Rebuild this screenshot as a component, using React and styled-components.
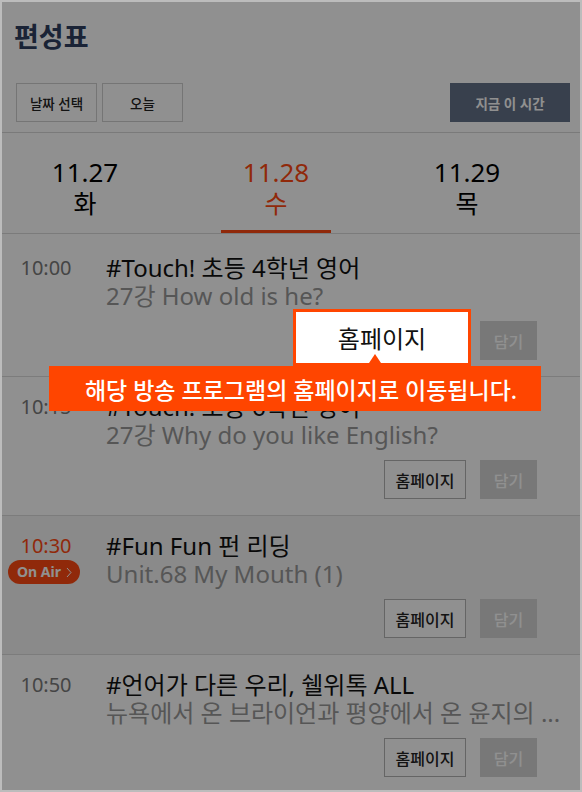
import styled, { createGlobalStyle } from "styled-components";

const GlobalStyle = createGlobalStyle`
  html, body {
    margin: 0;
    padding: 0;
    background: #fff;
  }
  body {
    font-family: "Noto Sans", "Noto Sans CJK KR", sans-serif;
  }
  * { box-sizing: border-box; }
`;

const days = [
  { date: "11.27", day: "화" },
  { date: "11.28", day: "수", active: true },
  { date: "11.29", day: "목" },
];

const programs = [
  { time: "10:00", title: "#Touch! 초등 4학년 영어", sub: "27강 How old is he?" },
  { time: "10:15", title: "#Touch! 초등 6학년 영어", sub: "27강 Why do you like English?" },
  { time: "10:30", title: "#Fun Fun 펀 리딩", sub: "Unit.68 My Mouth (1)", onAir: true },
  { time: "10:50", title: "#언어가 다른 우리, 쉘위톡 ALL", sub: "뉴욕에서 온 브라이언과 평양에서 온 윤지의 ..." },
];

const App = () => {
  return (
    <Frame>
      <GlobalStyle />
      <Header>
        <PageTitle>편성표</PageTitle>
        <Toolbar>
          <ToolButton>날짜 선택</ToolButton>
          <ToolButton>오늘</ToolButton>
          <ToolButton $dark>지금 이 시간</ToolButton>
        </Toolbar>
      </Header>

      <TabList>
        {days.map((d) => (
          <Tab key={d.date} $active={d.active}>
            <TabDate>{d.date}</TabDate>
            <TabDay>{d.day}</TabDay>
          </Tab>
        ))}
      </TabList>

      <ProgramList>
        {programs.map((p) => (
          <Row key={p.time} $onAir={p.onAir}>
            <TimeCell $onAir={p.onAir}>
              {p.time}
              {p.onAir && (
                <OnAirBadge>
                  On Air
                  <svg width="6" height="11" viewBox="0 0 6 11" fill="none">
                    <path d="M1 1l4 4.5L1 10" stroke="#fff" strokeWidth="1" />
                  </svg>
                </OnAirBadge>
              )}
            </TimeCell>
            <Info>
              <ProgramTitle>{p.title}</ProgramTitle>
              <ProgramSub>{p.sub}</ProgramSub>
              <Actions>
                <HomeButton>홈페이지</HomeButton>
                <CartButton>담기</CartButton>
              </Actions>
            </Info>
          </Row>
        ))}
      </ProgramList>

      <Dim />
      <Spotlight>홈페이지</Spotlight>
      <Tooltip>해당 방송 프로그램의 홈페이지로 이동됩니다.</Tooltip>
    </Frame>
  );
};

export default App;

const Frame = styled.div`
  position: relative;
  width: 582px;
  height: 792px;
  border: 2px solid #bcbcbc;
  overflow: hidden;
  background: #fff;
`;

const Header = styled.div`
  padding: 18px 10px 10px 14px;
  border-bottom: 1px solid #d8d8d8;
`;

const PageTitle = styled.h1`
  margin: 0 0 0 -2px;
  font-size: 27px;
  line-height: 34px;
  font-weight: 700;
  color: #2f3f60;
`;

const Toolbar = styled.div`
  display: flex;
  gap: 5px;
  margin-top: 29px;

  > :last-child {
    margin-left: auto;
  }
`;

const ToolButton = styled.button`
  width: ${(p) => (p.$dark ? "120px" : "81px")};
  height: 39px;
  padding: 0;
  border: 1px solid ${(p) => (p.$dark ? "#637188" : "#cfcfcf")};
  background: ${(p) => (p.$dark ? "#637188" : "#fff")};
  color: ${(p) => (p.$dark ? "#fff" : "#222")};
  font-family: inherit;
  font-size: 13.5px;
  font-weight: ${(p) => (p.$dark ? 700 : 500)};
`;

const TabList = styled.div`
  display: flex;
  gap: 81px;
  padding-left: 28px;
  border-bottom: 1px solid #dadada;
`;

const Tab = styled.div`
  width: 110px;
  padding: 24px 0 11px;
  text-align: center;
  color: ${(p) => (p.$active ? "#ff4a12" : "#000")};
  border-bottom: 3px solid ${(p) => (p.$active ? "#ff4a12" : "transparent")};
`;

const TabDate = styled.div`
  font-size: 26px;
  line-height: 31px;
`;

const TabDay = styled.div`
  font-size: 25px;
  line-height: 31px;
`;

const ProgramList = styled.div`
  padding-top: 3px;
`;

const Row = styled.div`
  display: grid;
  grid-template-columns: 88px 1fr;
  column-gap: 16px;
  padding: 17px 14px 16px 0;
  border-bottom: 1px solid #dcdcdc;
  background: ${(p) => (p.$onAir ? "#f4f4f4" : "#fff")};

  & + & {
    padding-top: 16px;
  }
`;

const TimeCell = styled.div`
  display: flex;
  flex-direction: column;
  align-items: center;
  font-size: 20px;
  line-height: 28px;
  color: ${(p) => (p.$onAir ? "#ff4a12" : "#7a7a7a")};
`;

const OnAirBadge = styled.span`
  display: inline-flex;
  align-items: center;
  gap: 5px;
  height: 24px;
  padding: 0 8px 0 9px;
  margin-left: -4px;
  border-radius: 12px;
  background: #ff4a12;
  color: #fff;
  font-size: 14px;
  line-height: 24px;
  font-weight: 700;
`;

const Info = styled.div`
  min-width: 0;
`;

const ProgramTitle = styled.div`
  font-size: 24px;
  line-height: 28px;
  color: #111;
  white-space: nowrap;
`;

const ProgramSub = styled.div`
  font-size: 24px;
  line-height: 28px;
  padding: 3px 0;
  margin: -3px 0;
  color: #999;
  white-space: nowrap;
  overflow: hidden;
  text-overflow: ellipsis;
`;

const Actions = styled.div`
  display: flex;
  justify-content: flex-end;
  gap: 14px;
  margin: 11px 29px 0 0;
`;

const HomeButton = styled.button`
  width: 82px;
  height: 39px;
  padding: 0;
  border: 1px solid #b3b3b3;
  background: #fff;
  color: #222;
  font-family: inherit;
  font-size: 16px;
  font-weight: 500;
`;

const CartButton = styled.button`
  width: 57px;
  height: 39px;
  padding: 0;
  border: none;
  background: #d5d5d5;
  color: #fff;
  font-family: inherit;
  font-size: 16px;
  font-weight: 500;
`;

const Dim = styled.div`
  position: absolute;
  inset: 0;
  background: rgba(0, 0, 0, 0.435);
  z-index: 10;
`;

const Spotlight = styled.div`
  position: absolute;
  left: 291px;
  top: 307px;
  width: 178px;
  height: 57px;
  display: flex;
  align-items: center;
  justify-content: center;
  border: 3px solid #ff4500;
  background: #fff;
  color: #111;
  font-size: 24px;
  z-index: 11;
`;

const Tooltip = styled.div`
  position: absolute;
  left: 47px;
  top: 364px;
  width: 492px;
  height: 45px;
  display: flex;
  align-items: center;
  justify-content: center;
  padding-left: 12px;
  background: #ff4500;
  color: #fff;
  font-size: 23px;
  font-weight: 500;
  z-index: 12;

  &::before {
    content: "";
    position: absolute;
    top: -12px;
    left: 318px;
    border-left: 8px solid transparent;
    border-right: 8px solid transparent;
    border-bottom: 12px solid #ff4500;
  }
`;
